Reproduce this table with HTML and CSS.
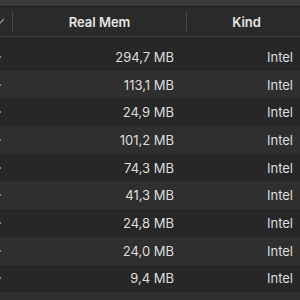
FILE: index.html
```html
<!DOCTYPE html>
<html lang="en">
<head>
  <meta charset="UTF-8" />
  <title>Activity Monitor - Memory</title>
  <link rel="stylesheet" href="styles.css">
</head>
<body>
  <div class="toolbar"></div>

  <div class="table-head">
    <div class="head-prev">
      <svg class="chevron" width="4" height="5" viewBox="0 0 4 5">
        <path d="M0 4 L3.5 0.5" stroke="#9a9a9a" stroke-width="1.2" fill="none" stroke-linecap="round" />
      </svg>
    </div>
    <div class="sep"></div>
    <div class="head-mem">Real Mem</div>
    <div class="sep"></div>
    <div class="head-kind">Kind</div>
  </div>

  <div class="rows" id="rows"></div>

  <script>
    const procesos = ['294,7', '113,1', '24,9', '101,2', '74,3', '41,3', '24,8', '24,0', '9,4'];
    const rows = document.getElementById('rows');
    procesos.forEach((mem, i) => {
      const row = document.createElement('div');
      row.className = 'row' + (i % 2 ? ' alt' : '');
      row.innerHTML = `
        <div class="cell-prev"><span class="dot"></span></div>
        <div class="cell-mem">${mem} MB</div>
        <div class="cell-kind">Intel</div>
      `;
      rows.appendChild(row);
    });
    const tail = document.createElement('div');
    tail.className = 'row alt tail';
    rows.appendChild(tail);
  </script>
</body>
</html>
```

FILE: styles.css
```css
body {
  margin: 0;
  background: #272727;
  font-family: 'Inter', 'Liberation Sans', sans-serif;
  font-size: 13px;
  color: #dedede;
  overflow: hidden;
}
.toolbar {
  height: 6px;
  background: #3a3a3a;
  border-bottom: 1px solid #1d1d1d;
}
.table-head {
  display: flex;
  align-items: center;
  height: 29px;
  background: #2a2a2a;
  border-bottom: 1px solid #3d3d3d;
  font-weight: 600;
  color: #e6e6e6;
}
.head-prev {
  width: 12px;
  display: flex;
  align-items: center;
}
.sep {
  width: 1px;
  height: 19px;
  background: #4a4a4a;
}
.head-mem {
  width: 173px;
  text-align: center;
}
.head-kind {
  flex: 1;
  text-align: center;
  padding-left: 6px;
}
.rows {
  padding-top: 6px;
}
.row {
  display: flex;
  align-items: center;
  height: 27.7px;
  background: #272727;
}
.row.alt {
  background: #2f2f2f;
}
.row.tail {
  height: 7.7px;
}
.cell-prev {
  width: 13px;
  display: flex;
  align-items: center;
}
.dot {
  width: 1px;
  height: 2px;
  background: #858585;
}
.cell-mem {
  width: 174px;
  text-align: right;
  padding-right: 13px;
  box-sizing: border-box;
}
.cell-kind {
  flex: 1;
  text-align: right;
  padding-right: 7px;
}
```
